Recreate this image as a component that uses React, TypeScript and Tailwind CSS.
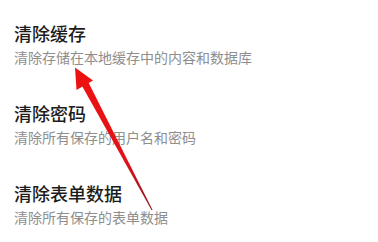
import React from 'react'

const items = [
  { title: '清除缓存', desc: '清除存储在本地缓存中的内容和数据库' },
  { title: '清除密码', desc: '清除所有保存的用户名和密码' },
  { title: '清除表单数据', desc: '清除所有保存的表单数据' },
]

const font = { fontFamily: '"Noto Sans CJK SC", "Noto Sans", sans-serif' }

export default function App() {
  return (
    <div className="relative h-[242px] w-[378px] overflow-hidden bg-white" style={font}>
      <div className="flex flex-col gap-[33px] pl-[14px] pt-[21px]">
        {items.map((item) => (
          <div key={item.title} className="flex flex-col">
            <span className="text-[18px] leading-[25px] font-medium text-[#1c1c1c]">{item.title}</span>
            <span className="text-[14px] leading-[22px] text-[#8e8e8e]">{item.desc}</span>
          </div>
        ))}
      </div>

      {/* red annotation arrow */}
      <svg className="pointer-events-none absolute left-0 top-0" width="378" height="242" viewBox="0 0 378 242">
        <defs>
          <linearGradient id="shaft" x1="84" y1="86" x2="152" y2="210" gradientUnits="userSpaceOnUse">
            <stop offset="0" stopColor="#ee1111" />
            <stop offset="0.6" stopColor="#e01218" />
            <stop offset="1" stopColor="#8e1622" />
          </linearGradient>
        </defs>
        <polygon points="81.5,85 88,81.5 152.6,210 151.6,210.2" fill="url(#shaft)" />
        <polygon points="75,67.5 93,80.5 76.5,90" fill="#ee1111" />
      </svg>
    </div>
  )
}
